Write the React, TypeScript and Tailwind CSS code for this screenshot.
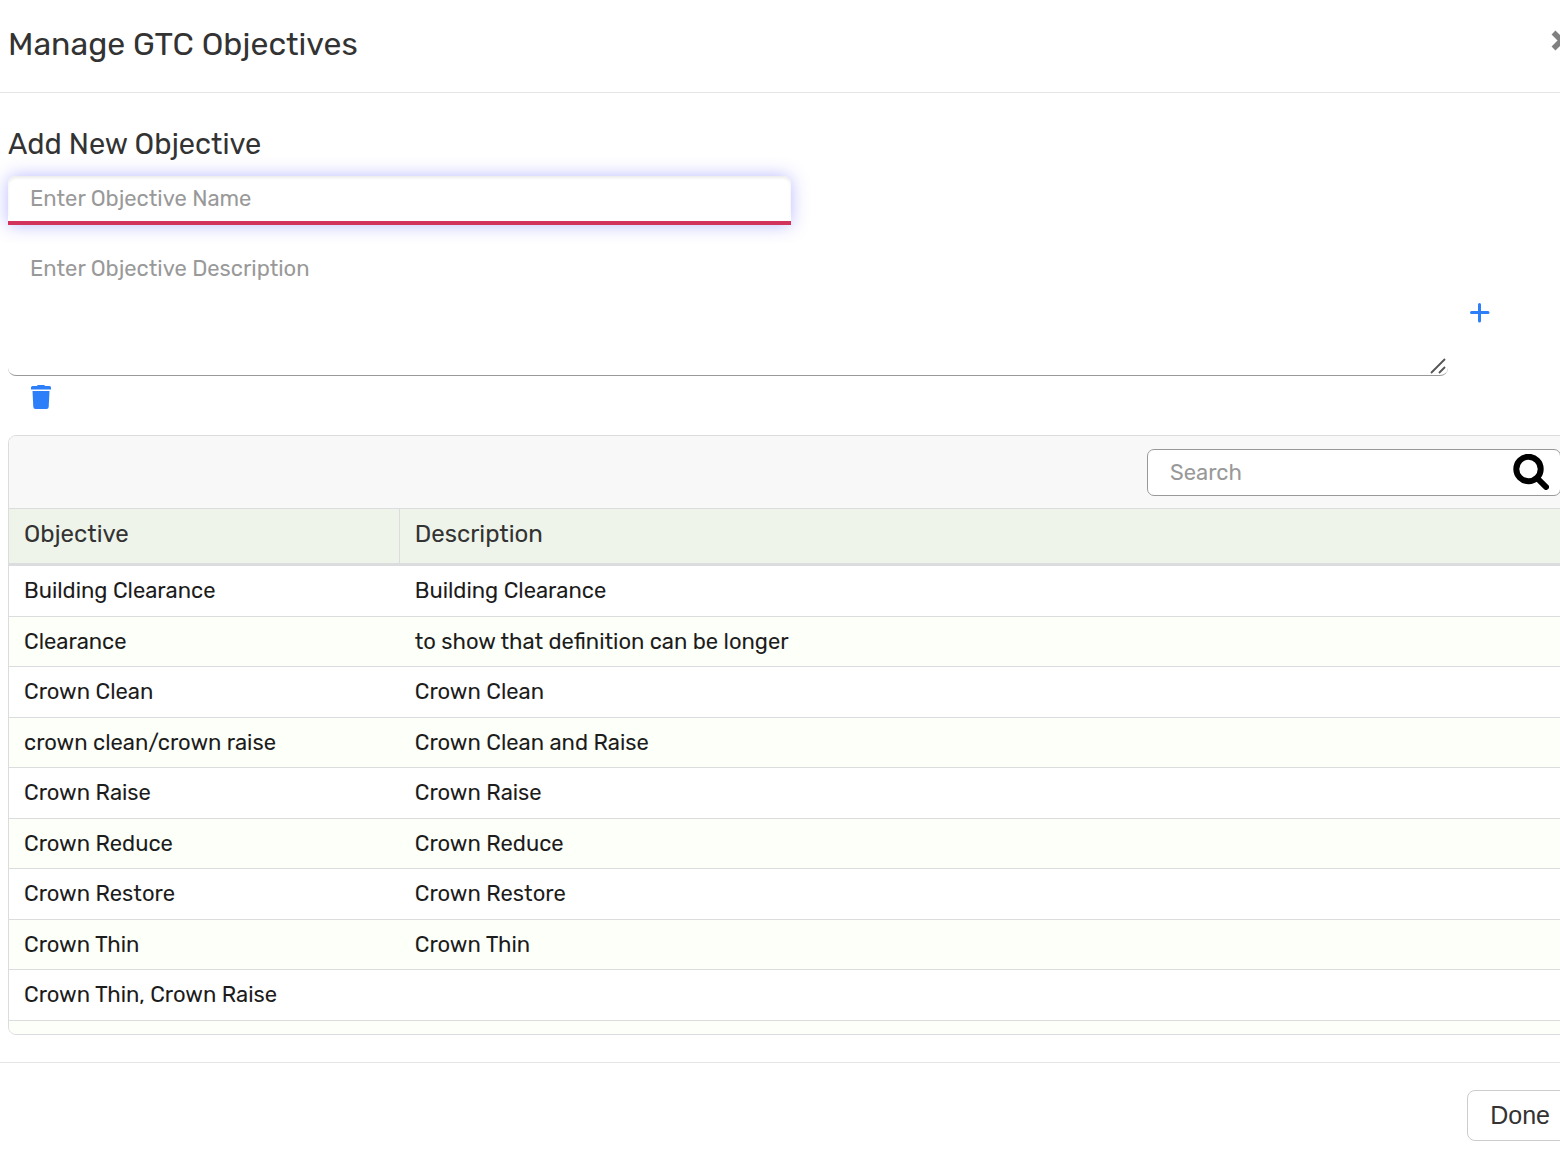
import React from "react";

type Objective = { name: string; description: string };

const objectives: Objective[] = [
  { name: "Building Clearance", description: "Building Clearance" },
  { name: "Clearance", description: "to show that definition can be longer" },
  { name: "Crown Clean", description: "Crown Clean" },
  { name: "crown clean/crown raise", description: "Crown Clean and Raise" },
  { name: "Crown Raise", description: "Crown Raise" },
  { name: "Crown Reduce", description: "Crown Reduce" },
  { name: "Crown Restore", description: "Crown Restore" },
  { name: "Crown Thin", description: "Crown Thin" },
  { name: "Crown Thin, Crown Raise", description: "" },
  { name: "", description: "" },
];

function CloseIcon() {
  return (
    <svg width="22" height="22" viewBox="0 0 22 22" fill="none" stroke="#808080" strokeWidth="5.500" aria-hidden="true">
      <path d="M2.500 2.500l16 16M18.500 2.500l-16 16" />
    </svg>
  );
}

function PlusIcon() {
  return (
    <svg width="20" height="20" viewBox="0 0 20 20" fill="none" stroke="#2d7ff9" strokeWidth="3" strokeLinecap="round" aria-hidden="true">
      <path d="M9.500 1.500v16.500M1.500 9.500h16.500" />
    </svg>
  );
}

function TrashIcon() {
  return (
    <svg width="20" height="24" viewBox="0 0 20 24" fill="#2d7ff9" aria-hidden="true">
      <path d="M6 1Q6.200 0 7.200 0h5.600Q13.800 0 14 1h4.500Q20 1 20 2.500V4.500H0V2.500Q0 1 1.500 1z" />
      <path d="M1.500 6h17l-.8 16q-.1 2-2.200 2h-11q-2.100 0-2.200-2z" />
    </svg>
  );
}

function SearchIcon() {
  return (
    <svg width="36" height="36" viewBox="0 0 36 36" fill="none" stroke="#000" strokeWidth="6" strokeLinecap="round" aria-hidden="true">
      <circle cx="15.500" cy="15" r="12.200" />
      <path d="M24.500 24.500l8.500 8.500" />
    </svg>
  );
}

function ResizeGrip() {
  return (
    <svg width="16" height="16" viewBox="0 0 16 16" fill="none" stroke="#555" strokeWidth="1.800" aria-hidden="true">
      <path d="M1 15L15 1M9 15l6-6" />
    </svg>
  );
}

export default function App() {
  return (
    <div className="overflow-hidden bg-white font-[Rubik,Roboto,sans-serif] text-[#333]">
      <div className="-mr-[13px]">
        <header className="flex h-[93px] items-start justify-between border-b border-[#e5e5e5] pt-[22px] pl-2">
          <h1 className="text-[32px] leading-[44px]">Manage GTC Objectives</h1>
          <button type="button" aria-label="Close" className="mt-2">
            <CloseIcon />
          </button>
        </header>

        <main className="pt-8 pl-2">
          <section>
            <h2 className="text-[29px] leading-[38px]">Add New Objective</h2>
            <div className="mt-[13px] w-1/2 rounded-t-lg border-b-4 border-[#d1335b] shadow-[0_0_18px_rgba(102,102,255,0.45)]">
              <input
                type="text"
                aria-label="Objective name"
                placeholder="Enter Objective Name"
                className="block h-[45px] w-full rounded-lg bg-white px-[22px] text-[22px] shadow-[inset_0_2px_3px_rgba(0,0,0,0.08)] outline-none placeholder:text-[#999]"
              />
            </div>
            <div className="mt-[18px] flex items-center">
              <div className="relative w-[92%]">
                <textarea
                  aria-label="Objective description"
                  placeholder="Enter Objective Description"
                  className="block h-[133px] w-full resize-none rounded-lg border-b border-[#999] bg-white px-[22px] pt-3 text-[22px] leading-[28px] outline-none placeholder:text-[#999]"
                />
                <span className="absolute right-0.5 bottom-0.5">
                  <ResizeGrip />
                </span>
              </div>
              <button type="button" aria-label="Add objective" className="ml-[22px] pt-1.5">
                <PlusIcon />
              </button>
            </div>
            <button type="button" aria-label="Delete objective" className="mt-[9px] ml-[23px] block">
              <TrashIcon />
            </button>
          </section>

          <section className="mt-[26px] h-[600px] overflow-hidden rounded-lg border border-[#dadcdd]">
            <div className="flex h-[73px] items-center justify-end border-b border-[#dadcdd] bg-[#f8f8f8] pr-[11px]">
              <div className="relative w-[414px]">
                <input
                  type="search"
                  aria-label="Search"
                  placeholder="Search"
                  className="block h-[47px] w-full rounded-[7px] border border-[#999] bg-white pr-14 pl-[22px] text-[22px] outline-none placeholder:text-[#999]"
                />
                <button type="button" aria-label="Run search" className="absolute top-[5px] right-3">
                  <SearchIcon />
                </button>
              </div>
            </div>
            <table className="w-full table-fixed border-separate border-spacing-0 text-left">
              <thead className="bg-[#eff4ea] text-[24px] leading-[28px] text-[#333]">
                <tr className="h-[57px]">
                  <th scope="col" className="w-1/4 border-r border-b-3 border-[#dadcdd] px-[15px] pb-1 font-normal">Objective</th>
                  <th scope="col" className="border-b-3 border-[#dadcdd] px-[15px] pb-1 font-normal">Description</th>
                </tr>
              </thead>
              <tbody className="text-[22px] leading-[28px] text-[#1c1c1c]">
                {objectives.map((row, i) => (
                  <tr key={i} className="odd:h-[51px] even:h-[50px] even:bg-[#fdfff9]">
                    <td className="border-b border-[#dadcdd] px-[15px]">{row.name}</td>
                    <td className="border-b border-[#dadcdd] px-[15px]">{row.description}</td>
                  </tr>
                ))}
              </tbody>
            </table>
          </section>
        </main>

        <footer className="mt-[27px] flex justify-end border-t border-[#e5e5e5] pt-[27px] pb-9">
          <button
            type="button"
            className="h-[51px] rounded-lg border border-[#ccc] bg-white px-[22px] font-['Liberation_Sans',Arial,sans-serif] text-[25px] text-[#333]"
          >
            Done
          </button>
        </footer>
      </div>
    </div>
  );
}
